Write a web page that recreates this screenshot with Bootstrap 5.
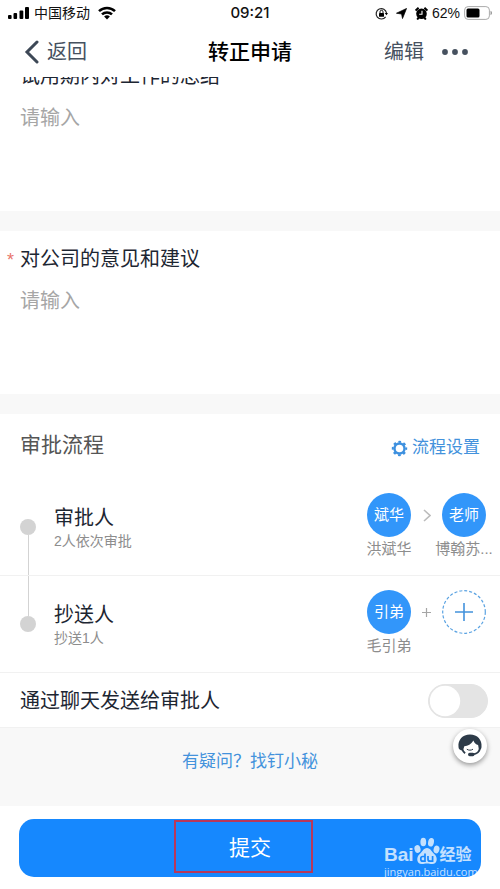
<!DOCTYPE html>
<html lang="zh-CN">
<head>
<meta charset="utf-8">
<meta name="viewport" content="width=device-width, initial-scale=1">
<title>转正申请</title>
<link href="https://cdn.jsdelivr.net/npm/bootstrap@5.3.0/dist/css/bootstrap.min.css" rel="stylesheet">
<style>
  :root { --ink: #1d2632; --slate: #46515f; --muted: #8d8d8d; --blue: #3296fa; --link: #4392dc; --band: #f8f8f8; --rule: #f1f1f1; }
  body { font-family: "Liberation Sans", "Noto Sans CJK SC", sans-serif; color: var(--ink); background: #fff; font-size: 20px; line-height: 28px; }
  svg { display: block; flex: none; }
  .page-head { background: #fff; z-index: 5; }
  .status-bar { height: 26px; font-size: 14px; line-height: 26px; color: #111; padding: 0 8px; }
  .status-bar > div { flex: 1 1 0; }
  .clock { font-family: Inter, sans-serif; font-size: 15px; font-weight: 500; }
  .title-bar { height: 51px; padding: 0 24px; }
  .title-bar > div { flex: 1 1 0; }
  .title-bar h1 { font-size: 21px; line-height: 28px; font-weight: 500; color: #000; }
  .plain-btn { background: none; border: 0; padding: 0; color: var(--slate); }
  .field-block { padding: 14px 20px 16px; border-bottom: 20px solid var(--band); }
  .field-first { margin-top: -15px; }
  .field-block label { display: block; position: relative; }
  .required-star { position: absolute; left: -13px; top: 1px; font-size: 18px; color: #e8766b; }
  .answer { display: block; width: 100%; height: 91px; margin-top: 14px; padding: 0; border: 0; resize: none; outline: 0; background: none; }
  .answer::placeholder { color: #a6a6a6; opacity: 1; }
  .flow-head { padding: 16px 20px 17px; }
  .flow-head h2 { font-size: 21px; line-height: 30px; font-weight: 400; color: #555; }
  .flow-head a { font-size: 17px; color: var(--link); margin-top: 4px; }
  .step { height: 97px; padding: 0 6px 0 20px; border-bottom: 1px solid var(--rule); }
  .rail { width: 16px; }
  .rail i { flex: 1 1 0; width: 1px; }
  .rail .on { background: #d3d3d3; }
  .rail b { width: 16px; height: 16px; border-radius: 50%; background: #d3d3d3; }
  .step-text { margin-left: 18px; }
  .step-text small { display: block; font-size: 14px; line-height: 18px; color: var(--muted); }
  .person { width: 60px; }
  .person small { font-size: 15px; line-height: 24px; height: 24px; white-space: nowrap; color: var(--muted); }
  .face { width: 44px; height: 44px; border-radius: 50%; background: var(--blue); color: #fff; font-size: 15px; line-height: 44px; }
  .joiner { width: 15px; height: 44px; }
  .send-row { padding: 11px 12px 9px 20px; border-bottom: 1px solid var(--rule); }
  .send-row .form-check-input { width: 60px; height: 34px; margin: 0; background-color: #e4e4e4; border: 1px solid #e4e4e4; background-size: 32px 32px; background-image: url("data:image/svg+xml,%3csvg xmlns='http://www.w3.org/2000/svg' viewBox='-4 -4 8 8'%3e%3ccircle r='3.8' fill='%23fff'/%3e%3c/svg%3e"); background-repeat: no-repeat; }
  .help-band { background: var(--band); padding: 18px 20px 30px; }
  .help-band a { font-size: 17px; color: var(--link); }
  .service-btn { position: absolute; right: 13px; top: 1px; width: 34px; height: 34px; border: 0; padding: 4px; border-radius: 50%; background: #fff; box-shadow: 0 2px 5px rgba(0,0,0,.4); }
  .submit-bar { padding: 13px 19px 12px; line-height: 0; }
  .submit-btn { height: 58px; border: 0; border-radius: 15px; background: #1688fe; color: #fff; font-size: 21px; line-height: 28px; }
  .red-frame { position: absolute; left: 50%; top: 14px; width: 139px; height: 53px; margin-left: -76px; border: 2px solid #b8385a; pointer-events: none; }
  .credit { position: absolute; right: 27px; bottom: 10px; width: 89px; color: #fff; opacity: .75; pointer-events: none; }
  .credit-top { height: 28px; line-height: 20px; }
  .credit-top strong { font-size: 19px; }
  .credit-top span { font-size: 16px; font-weight: 700; }
  .credit-url { font-family: "Open Sans", sans-serif; font-size: 11px; line-height: 14px; white-space: nowrap; }
</style>
<script src="https://cdn.jsdelivr.net/npm/bootstrap@5.3.0/dist/js/bootstrap.bundle.min.js"></script>
</head>
<body>
<header class="page-head position-relative">
  <div class="status-bar d-flex align-items-center">
    <div class="d-flex align-items-center">
      <svg width="22" height="12" viewBox="0 0 22 12"><g fill="#000"><rect x="0" y="8" width="3.6" height="4" rx="1"/><rect x="5.5" y="6" width="3.6" height="6" rx="1"/><rect x="11.5" y="3.5" width="3.8" height="8.5" rx="1"/><rect x="17" y="0" width="4" height="12" rx="1"/></g></svg>
      <span class="ms-1">中国移动</span>
      <svg class="ms-2" width="18" height="14" viewBox="0 0 18 14"><g fill="none" stroke="#000" stroke-width="2.5"><path d="M1 5.2a11.5 11.5 0 0 1 16 0"/><path d="M4 8.4a7.2 7.2 0 0 1 10 0"/></g><path d="M9 13.5 6.1 10.6a4.3 4.3 0 0 1 5.8 0z"/></svg>
    </div>
    <time class="clock">09:21</time>
    <div class="d-flex align-items-center justify-content-end">
      <svg class="me-2" width="13" height="13" viewBox="0 0 13 13"><path d="M10.6 9.8A5.2 5.2 0 1 1 11.5 6" fill="none" stroke="#222" stroke-width="1.2"/><path d="m9.7 6 1.8 2.3L13 6z"/><rect x="4" y="6" width="5" height="3.8" rx=".6"/><path d="M5 6V4.8a1.5 1.5 0 0 1 3 0V6" fill="none" stroke="#111"/></svg>
      <svg class="me-1" width="11" height="11" viewBox="0 0 11 12"><path d="M11 .5 6.600 11.500 5.600 6.600 0 5.700z" stroke="#000" stroke-width=".8"/></svg>
      <svg class="ms-1" width="13" height="13" viewBox="0 0 13 13"><circle cx="6.500" cy="6.800" r="5.300"/><path d="M.6 3.600 3.600.8M12.400 3.600 9.400.8M2.200 12.500l1.400-1.800M10.800 12.500l-1.400-1.800" stroke="#000" stroke-width="2"/><path d="M7 3.800v3.400H4.200" fill="none" stroke="#fff" stroke-width="1.100"/></svg>
      <span class="ms-1">62%</span>
      <svg class="ms-1" width="28" height="14" viewBox="0 0 28 14"><rect x=".6" y=".6" width="24.800" height="12.800" rx="3.500" fill="#fff" stroke="#aaa"/><rect x="2.500" y="2.500" width="13" height="9" rx="1.500"/><path d="M26.500 4.800c2 .7 2 3.700 0 4.400z" fill="#999"/></svg>
    </div>
  </div>
  <nav class="title-bar d-flex align-items-center">
    <div><button type="button" class="plain-btn d-flex align-items-center gap-2"><svg width="15" height="24" viewBox="0 0 15 24"><path d="M13 2 3 12l10 10" fill="none" stroke="#3d4856" stroke-width="3" stroke-linecap="round"/></svg>返回</button></div>
    <h1 class="m-0">转正申请</h1>
    <div class="d-flex justify-content-end align-items-center">
      <button type="button" class="plain-btn">编辑</button>
      <button type="button" class="plain-btn ms-3 me-2" aria-label="更多"><svg width="28" height="6" viewBox="0 0 28 6"><g fill="#46515f"><circle cx="5" cy="3" r="2.900"/><circle cx="15" cy="3" r="2.900"/><circle cx="25" cy="3" r="2.900"/></g></svg></button>
    </div>
  </nav>
</header>

<main>
  <form>
    <section class="field-block field-first pt-0">
      <label for="summary">试用期内对工作的总结</label>
      <textarea class="answer" id="summary" placeholder="请输入"></textarea>
    </section>
    <section class="field-block">
      <label for="advice"><span class="required-star">*</span>对公司的意见和建议</label>
      <textarea class="answer" id="advice" placeholder="请输入"></textarea>
    </section>

    <section>
      <div class="flow-head d-flex justify-content-between align-items-start">
        <h2 class="m-0">审批流程</h2>
        <a href="#" class="d-flex align-items-center text-decoration-none"><svg class="me-1" width="17" height="17" viewBox="0 0 17 17"><circle cx="8.500" cy="8.500" r="5" fill="none" stroke="#3d90df" stroke-width="2.400"/><circle cx="8.500" cy="8.500" r="6.700" fill="none" stroke="#3d90df" stroke-width="2" stroke-dasharray="2.630 2.630" stroke-dashoffset="1.300"/></svg>流程设置</a>
      </div>
      <div class="step d-flex">
        <div class="rail d-flex flex-column align-items-center"><i></i><b></b><i class="on"></i></div>
        <div class="step-text align-self-center flex-grow-1">审批人<small>2人依次审批</small></div>
        <div class="d-flex align-self-center">
          <div class="person d-flex flex-column align-items-center"><span class="face text-center">斌华</span><small>洪斌华</small></div>
          <div class="joiner d-flex align-items-center justify-content-center"><svg width="8" height="13" viewBox="0 0 8 13"><path d="m1 1 6 5.500-6 5.500" fill="none" stroke="#bcbcbc" stroke-width="1.600"/></svg></div>
          <div class="person d-flex flex-column align-items-center"><span class="face text-center">老师</span><small>博翰苏...</small></div>
        </div>
      </div>
      <div class="step d-flex">
        <div class="rail d-flex flex-column align-items-center"><i class="on"></i><b></b><i></i></div>
        <div class="step-text align-self-center flex-grow-1">抄送人<small>抄送1人</small></div>
        <div class="d-flex align-self-center">
          <div class="person d-flex flex-column align-items-center"><span class="face text-center">引弟</span><small>毛引弟</small></div>
          <div class="joiner d-flex align-items-center justify-content-center"><svg width="9" height="9" viewBox="0 0 9 9"><path d="M0 4.500h9M4.500 0v9" stroke="#a5a5a5" stroke-width="1.200"/></svg></div>
          <div class="person d-flex flex-column align-items-center"><button type="button" class="plain-btn" aria-label="添加抄送人"><svg width="44" height="44" viewBox="0 0 44 44"><circle cx="22" cy="22" r="21.300" fill="none" stroke="#5ba3e2" stroke-width="1.200" stroke-dasharray="3 2"/><path d="M13 22h18M22 13v18" stroke="#4392dc" stroke-width="1.600"/></svg></button></div>
        </div>
      </div>
      <div class="send-row d-flex align-items-center justify-content-between">
        <label for="chat">通过聊天发送给审批人</label>
        <div class="form-switch p-0 m-0 d-flex"><input class="form-check-input" type="checkbox" role="switch" id="chat"></div>
      </div>
    </section>

    <div class="help-band position-relative text-center">
      <a href="#" class="text-decoration-none">有疑问？找钉小秘</a>
      <button type="button" class="service-btn" aria-label="客服"><svg width="26" height="26" viewBox="0 0 26 26"><path d="M1.500 14C.8 7 5.500 1.600 13 1.600S25.200 7 24.500 14c0 1.700-1 2.900-2.500 3l-.9-5c-2.100-.5-3.800-2-4.700-4.500-2.300 3.600-5.500 5.500-9.100 5.800L6 17.500C3 17.500 1.500 16 1.500 14z" fill="#2d3b49"/><path d="M5.300 16.500c.6 1.600 1.700 2.900 2.800 3.700M23 15c-.5 4-3.500 6-7.500 6.400" fill="none" stroke="#2d3b49" stroke-width="1.900"/><rect x="11" y="19.700" width="6.500" height="3.500" rx="1.700" fill="#2d3b49"/><path d="M9.800 16.200c1.800 1.300 4.400 1.300 6.200 0" fill="none" stroke="#2d3b49" stroke-width="1"/></svg></button>
    </div>

    <footer class="submit-bar position-relative">
      <button type="submit" class="submit-btn w-100">提交</button>
      <div class="red-frame"></div>
      <div class="credit">
        <div class="credit-top d-flex align-items-end">
          <strong>Bai</strong>
          <svg width="26" height="28" viewBox="0 0 26 28"><g fill="#fff"><ellipse cx="3.500" cy="12" rx="3" ry="4" transform="rotate(-15 3.500 12)"/><ellipse cx="9.300" cy="5" rx="2.900" ry="4.300"/><ellipse cx="17" cy="5.300" rx="2.900" ry="4.300" transform="rotate(12 17 5.300)"/><ellipse cx="22.500" cy="12.500" rx="2.900" ry="3.900" transform="rotate(15 22.500 12.500)"/><path d="M13 11c3.500 0 4.700 3.800 7.500 6.200 3.500 3 3 9.800-2.300 9.800-2 0-3.200-.6-5.200-.6s-3.200.6-5.200.6C2.500 27 2 20.200 5.500 17.200 8.300 14.800 9.500 11 13 11z"/></g><g fill="none" stroke="#1688fe" stroke-width="1.700"><path d="M11 16.500v7.700H8.800a2 2 0 0 1-2-2v-.7a2 2 0 0 1 2-2H11M14 19v3.200a2 2 0 0 0 2 2h2.600V19"/></g></svg>
          <span>经验</span>
        </div>
        <div class="credit-url">jingyan.baidu.com</div>
      </div>
    </footer>
  </form>
</main>
</body>
</html>
